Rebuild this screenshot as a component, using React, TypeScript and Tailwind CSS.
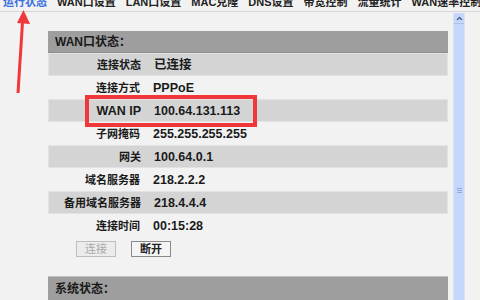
export default function App() {
  const tabs = [
    "运行状态",
    "WAN口设置",
    "LAN口设置",
    "MAC克隆",
    "DNS设置",
    "带宽控制",
    "流量统计",
    "WAN速率控制",
  ];

  const rows = [
    ["连接状态", "已连接"],
    ["连接方式", "PPPoE"],
    ["WAN IP", "100.64.131.113"],
    ["子网掩码", "255.255.255.255"],
    ["网关", "100.64.0.1"],
    ["域名服务器", "218.2.2.2"],
    ["备用域名服务器", "218.4.4.4"],
    ["连接时间", "00:15:28"],
  ];

  return (
    <div
      className="relative h-[300px] w-[480px] overflow-hidden bg-[#f2f2f2] text-[#1a1a1a]"
      style={{ fontFamily: "'Liberation Sans', 'Noto Sans CJK SC', sans-serif" }}
    >
      {/* tab bar, top half cut off */}
      <div className="h-[12px] overflow-hidden border-b border-[#d6d6d6]">
        <div className="-mt-[5px] flex gap-[10px] whitespace-nowrap pl-[3px] text-[11px] font-bold leading-[14px]">
          {tabs.map((t, i) => (
            <span key={t} className={i === 0 ? "text-[#3b6fe0]" : "text-[#222]"}>
              {t}
            </span>
          ))}
        </div>
      </div>

      <div className="flex">
        <div className="w-[453px] pl-[48px] pr-[5px] pt-[19px]">
          <div className="flex h-[22px] items-center border-b border-[#8e8e8e] bg-[#9e9e9e] pl-[7px] text-[12px] font-bold">
            WAN口状态：
          </div>

          {rows.map(([k, v], i) => (
            <div
              key={k}
              className={
                "flex h-[23px] items-center whitespace-nowrap pt-[1px] text-[12px] font-bold " +
                (i % 2 === 0 ? "border border-[#e2e2e2] bg-[#d4d4d4]" : "")
              }
            >
              <div className={"w-[92px] text-right " + (k === "WAN IP" ? "text-[12.5px]" : "text-[11px]")}>
                {k}
              </div>
              <div className="pl-[13px] text-[12.5px]">{v}</div>
            </div>
          ))}

          <div className="flex gap-[15px] pl-[28px] pt-[4px]">
            <button className="h-[16px] w-[40px] border border-[#bdbdbd] bg-[#ececec] text-[11px] leading-[14px] text-[#a8a8a8]">
              连接
            </button>
            <button className="h-[16px] w-[40px] border border-[#8a8a8a] bg-[#f4f4f4] text-[11px] font-bold leading-[14px] text-[#222]">
              断开
            </button>
          </div>

          <div className="mt-[19px] flex h-[24px] items-center border-t border-[#bdbdbd] bg-[#9e9e9e] pl-[7px] text-[12px] font-bold">
            系统状态：
          </div>
        </div>

        {/* scrollbar */}
        <div className="mt-[1px] flex h-[300px] w-[12px] flex-col border-x border-[#d8e2f4] bg-[#c5d7fb]">
          <div className="flex h-[11px] items-center justify-center border-b border-[#aac0ea]">
            <svg width="7" height="5" viewBox="0 0 7 5">
              <path d="M1 4 L3.5 1.5 L6 4" stroke="#4a5f8a" strokeWidth="1.3" fill="none" />
            </svg>
          </div>
          <div className="mt-[164px] flex flex-col items-center gap-[1px]">
            <div className="h-[1px] w-[5px] bg-[#8ea9dc]" />
            <div className="h-[1px] w-[5px] bg-[#8ea9dc]" />
            <div className="h-[1px] w-[5px] bg-[#8ea9dc]" />
          </div>
        </div>
      </div>

      {/* red annotation overlay */}
      <div className="absolute left-[85px] top-[95px] h-[32px] w-[172px] border-[4px] border-[#f0373a]" />
      <svg className="absolute left-0 top-0" width="40" height="100" viewBox="0 0 40 100">
        <path d="M16.5 93 L21 22 L24 22 L19.5 93 Z" fill="#f0373a" />
        <path d="M23.5 10 L30 24 L17 23 Z" fill="#f0373a" />
      </svg>
    </div>
  );
}
